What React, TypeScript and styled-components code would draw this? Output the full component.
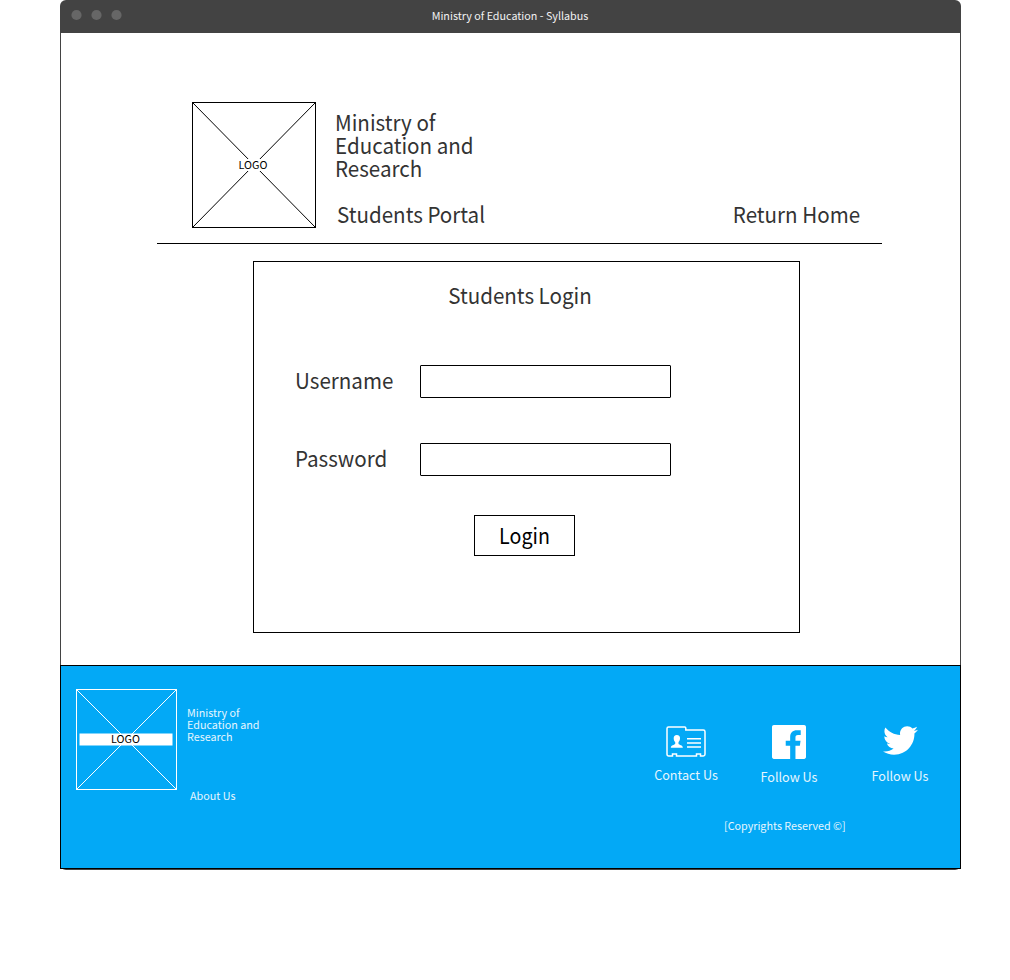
import React from "react";
import styled, { createGlobalStyle } from "styled-components";

const GlobalStyle = createGlobalStyle`
  *, *::before, *::after { box-sizing: border-box; }
  body {
    margin: 0;
    background: #fff;
    font-family: "Noto Sans CJK SC", "Noto Sans", sans-serif;
  }
`;

const BrowserWindow = styled.div`
  width: 901px;
  height: 870px;
  margin-left: 60px;
  display: flex;
  flex-direction: column;
  border-radius: 6px;
  background: linear-gradient(#434343, #434343) bottom / 895px 1px no-repeat;
`;

const TitleBar = styled.header`
  height: 33px;
  flex: none;
  display: grid;
  grid-template-columns: 1fr auto 1fr;
  align-items: center;
  padding: 0 0 3px 11px;
  border-radius: 6px 6px 0 0;
  background: #434343;
`;

const WindowDots = styled.svg`
  display: block;
`;

const WindowTitle = styled.div`
  color: #f2f2f2;
  font-size: 10.75px;
  line-height: 16px;
  padding: 2px 12px 0 0;
`;

const Page = styled.main`
  height: 632px;
  flex: none;
  padding: 69px 78px 0 96px;
  border: solid #434343;
  border-width: 0 1px;
`;

const SiteHeader = styled.div`
  height: 142px;
  display: flex;
  padding-left: 35px;
  border-bottom: 1px solid #000;
`;

const LogoBox = styled.svg`
  display: block;
  flex: none;
`;

const Brand = styled.div`
  width: 200px;
  margin: 8px 0 0 19px;
`;

const heading = `
  margin: 0;
  color: #333;
  font-weight: 400;
  font-size: 22px;
  line-height: 23px;
  transform: scaleX(0.935);
  transform-origin: left;
`;

const SiteName = styled.h1`
  ${heading}
  width: 160px;
`;

const PortalName = styled.h2`
  ${heading}
  margin: 23px 0 0 2px;
`;

const HomeLink = styled.a`
  ${heading}
  margin: 100px 22px 0 auto;
  transform-origin: right;
  white-space: nowrap;
`;

const LoginPanel = styled.form`
  width: 547px;
  height: 372px;
  margin: 17px 0 0 96px;
  padding: 21px 0 0 41px;
  border: 1px solid #000;
`;

const PanelTitle = styled.h2`
  ${heading}
  width: 450px;
  text-align: center;
  transform-origin: center;
`;

const Field = styled.label<{ $gap: number }>`
  display: grid;
  grid-template-columns: 125px 251px;
  align-items: center;
  margin-top: ${(p) => p.$gap}px;
`;

const FieldName = styled.span`
  ${heading}
  padding-bottom: 4px;
`;

const TextInput = styled.input`
  width: 251px;
  height: 33px;
  border: 1px solid #000;
  border-radius: 1px;
  background: #fff;
  outline: none;
`;

const LoginButton = styled.button`
  display: block;
  width: 101px;
  height: 41px;
  margin: 39px 0 0 179px;
  padding: 0 0 1px;
  border: 1px solid #000;
  background: #fff;
  color: #000;
  font: 400 21px/38px "Noto Sans CJK SC", "Noto Sans", sans-serif;
`;

const ButtonText = styled.span`
  display: block;
  transform: scaleX(0.935);
`;

const Footer = styled.footer`
  height: 204px;
  flex: none;
  display: flex;
  justify-content: space-between;
  padding: 23px 31px 0 15px;
  border: 1px solid #000;
  background: #03a9f6;
  color: #e6f6fe;
  font-size: 10.75px;
  line-height: 12px;
`;

const FooterBrand = styled.div`
  display: flex;
  gap: 10px;
`;

const FooterText = styled.div`
  width: 80px;
  padding-top: 18px;
`;

const AboutLink = styled.div`
  margin: 47px 0 0 3px;
`;

const FooterRight = styled.div`
  width: 275px;
  padding-top: 35px;
`;

const Social = styled.div`
  display: flex;
  height: 62px;
`;

const SocialLink = styled.a<{ $width: number; $left: number; $top: number; $gap: number }>`
  width: ${(p) => p.$width}px;
  margin-left: ${(p) => p.$left}px;
  padding-top: ${(p) => p.$top}px;
  display: flex;
  flex: none;
  flex-direction: column;
  align-items: center;
  gap: ${(p) => p.$gap}px;
  font-size: 12.6px;
  line-height: 16px;
  white-space: nowrap;
`;

const Copyright = styled.div`
  margin: 34px 0 0 70px;
`;

const ContactIcon = () => (
  <svg width="40" height="32" viewBox="0 0 40 32" fill="none" stroke="#fff">
    <path
      d="M2.5 1H18.7Q19.8 1 19.8 2.1V4H37.3Q39 4 39 5.7V28.2Q39 29.9 37.3 29.9H34.5V27.9H30.5V29.9H10.5V27.9H6.5V29.9H2.7Q1 29.9 1 28.2V2.5Q1 1 2.5 1Z"
      strokeWidth="1.5"
    />
    <path d="M21 12.7H35M21 16.9H35M21 21H35" strokeWidth="1.5" />
    <path
      d="M10.8 8.9C13 8.9 14.2 10.3 14 12.5C13.9 14.3 13.2 15.3 12.5 16.1V18.1C13.3 19.1 16.6 19.1 16.9 21.7H4.8C5.1 19.1 8.4 19.1 9.2 18.1V16.1C8.4 15.3 7.8 14.3 7.7 12.5C7.6 10.3 8.7 8.9 10.8 8.9Z"
      fill="#fff"
      stroke="none"
    />
  </svg>
);

const FacebookIcon = () => (
  <svg width="34" height="34" viewBox="0 0 24 24" fill="#fff">
    <path d="M22.676 0H1.324C.593 0 0 .593 0 1.324v21.352C0 23.408.593 24 1.324 24h11.494v-9.294H9.689v-3.621h3.129V8.41c0-3.099 1.894-4.785 4.659-4.785 1.325 0 2.464.097 2.796.141v3.24h-1.921c-1.5 0-1.792.721-1.792 1.771v2.311h3.584l-.465 3.63H16.56V24h6.115c.733 0 1.325-.592 1.325-1.324V1.324C24 .593 23.408 0 22.676 0" />
  </svg>
);

const TwitterIcon = () => (
  <svg width="35" height="29" viewBox="0 2.25 24 19.5" fill="#fff">
    <path d="M23.954 4.569c-.885.389-1.83.654-2.825.775 1.014-.611 1.794-1.574 2.163-2.723-.951.555-2.005.959-3.127 1.184-.896-.959-2.173-1.559-3.591-1.559-2.717 0-4.92 2.203-4.92 4.917 0 .39.045.765.127 1.124C7.691 8.094 4.066 6.13 1.64 3.161c-.427.722-.666 1.561-.666 2.475 0 1.71.87 3.213 2.188 4.096-.807-.026-1.566-.248-2.228-.616v.061c0 2.385 1.693 4.374 3.946 4.827-.413.111-.849.171-1.296.171-.314 0-.615-.03-.916-.086.631 1.953 2.445 3.377 4.604 3.417-1.68 1.319-3.809 2.105-6.102 2.105-.39 0-.779-.023-1.17-.067 2.189 1.394 4.768 2.209 7.557 2.209 9.054 0 13.999-7.496 13.999-13.986 0-.209 0-.42-.015-.63.961-.689 1.8-1.56 2.46-2.548l-.047-.02z" />
  </svg>
);

export default function App() {
  return (
    <>
      <GlobalStyle />
      <BrowserWindow>
        <TitleBar>
          <WindowDots width="52" height="12" viewBox="0 0 52 12" fill="#666">
            <circle cx="5.5" cy="6" r="5.1" />
            <circle cx="25.5" cy="6" r="5.1" />
            <circle cx="45.5" cy="6" r="5.1" />
          </WindowDots>
          <WindowTitle>Ministry of Education - Syllabus</WindowTitle>
        </TitleBar>
        <Page>
          <SiteHeader>
            <LogoBox width="124" height="126" viewBox="0 0 124 126">
              <rect x="0.5" y="0.5" width="123" height="125" fill="#fff" stroke="#000" />
              <path d="M0.5 0.5L123.5 125.5M123.5 0.5L0.5 125.5" stroke="#000" />
              <rect x="3" y="57" width="118" height="12" fill="#fff" />
              <text x="61" y="67" fontSize="10.75" textAnchor="middle">LOGO</text>
            </LogoBox>
            <Brand>
              <SiteName>Ministry of Education and Research</SiteName>
              <PortalName>Students Portal</PortalName>
            </Brand>
            <HomeLink>Return Home</HomeLink>
          </SiteHeader>
          <LoginPanel>
            <PanelTitle>Students Login</PanelTitle>
            <Field $gap={59}>
              <FieldName>Username</FieldName>
              <TextInput type="text" />
            </Field>
            <Field $gap={45}>
              <FieldName>Password</FieldName>
              <TextInput type="password" />
            </Field>
            <LoginButton type="button">
              <ButtonText>Login</ButtonText>
            </LoginButton>
          </LoginPanel>
        </Page>
        <Footer>
          <FooterBrand>
            <LogoBox width="101" height="101" viewBox="0 0 101 101">
              <rect x="0.5" y="0.5" width="100" height="100" fill="none" stroke="#fff" />
              <path d="M0.5 0.5L100.5 100.5M100.5 0.5L0.5 100.5" stroke="#fff" />
              <rect x="3.5" y="44.5" width="93" height="12" fill="#fff" />
              <text x="49.5" y="54" fontSize="10.75" textAnchor="middle">LOGO</text>
            </LogoBox>
            <FooterText>
              Ministry of Education and Research
              <AboutLink>About Us</AboutLink>
            </FooterText>
          </FooterBrand>
          <FooterRight>
            <Social>
              <SocialLink $width={64} $left={0} $top={2} $gap={9}>
                <ContactIcon />
                Contact Us
              </SocialLink>
              <SocialLink $width={58} $left={42} $top={1} $gap={10}>
                <FacebookIcon />
                Follow Us
              </SocialLink>
              <SocialLink $width={58} $left={53} $top={2} $gap={13}>
                <TwitterIcon />
                Follow Us
              </SocialLink>
            </Social>
            <Copyright>[Copyrights Reserved ©]</Copyright>
          </FooterRight>
        </Footer>
      </BrowserWindow>
    </>
  );
}
